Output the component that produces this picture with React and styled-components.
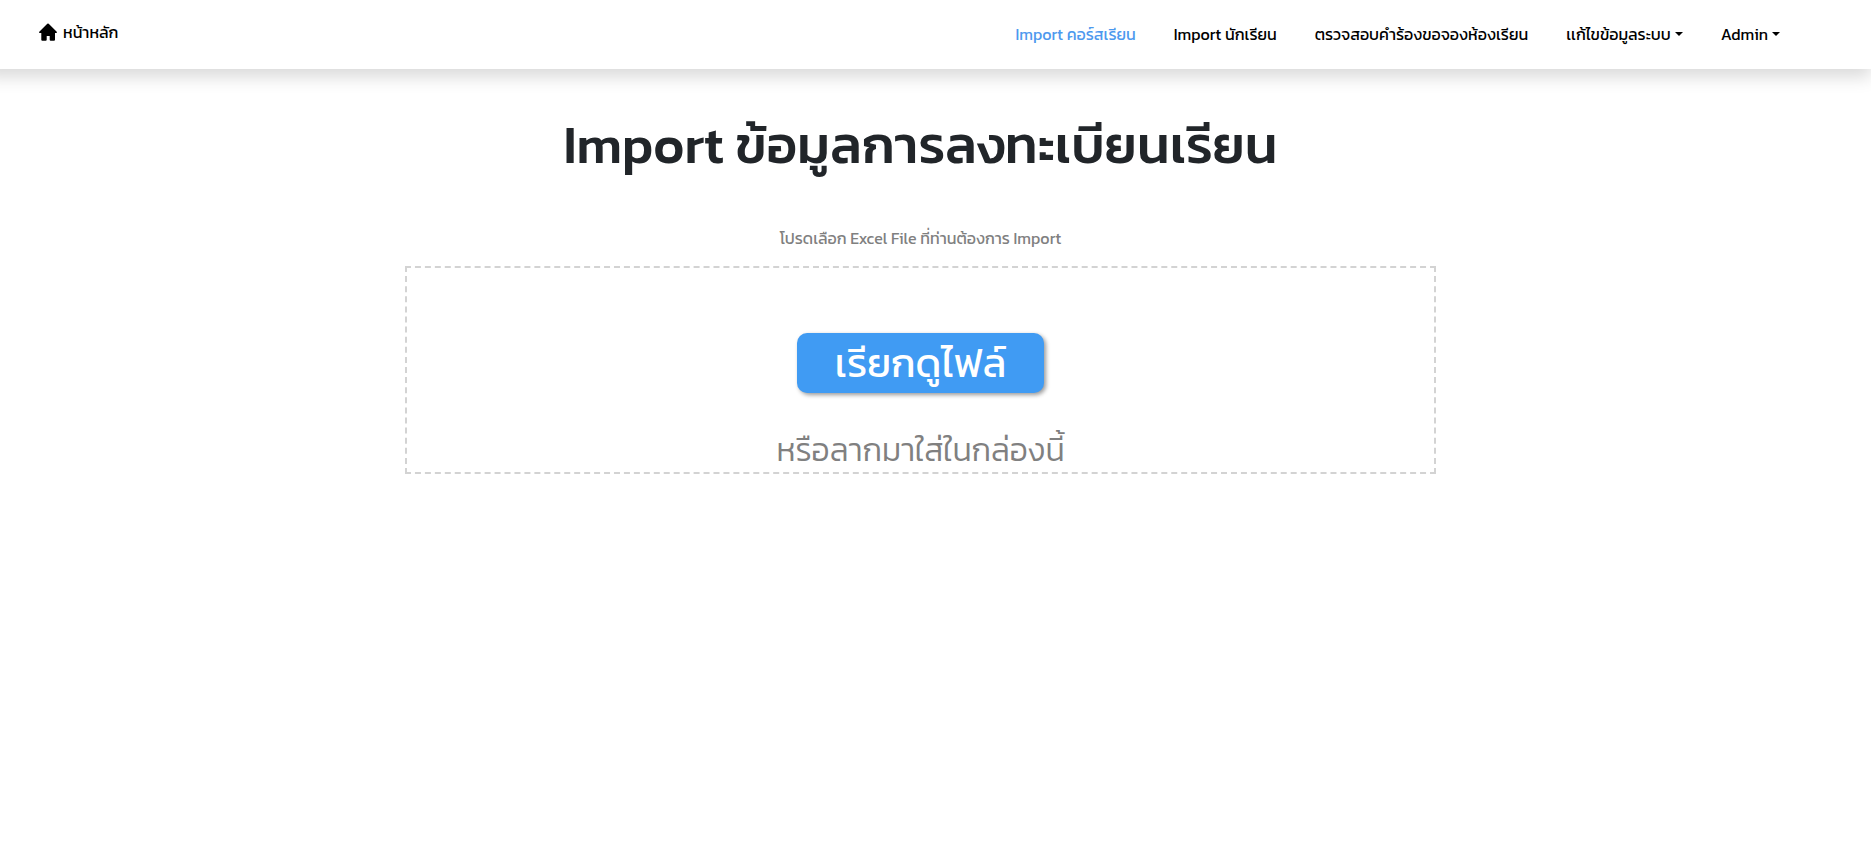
import React from 'react';
import styled, { createGlobalStyle } from 'styled-components';

const Global = createGlobalStyle`
  *, *::before, *::after { box-sizing: border-box; }
  body {
    margin: 0;
    background: #fff;
    color: #212529;
    font-family: Kanit, "Open Sans", "Noto Sans Thai", "Noto Sans", sans-serif;
    font-size: 16px;
    font-weight: 400;
    line-height: 24px;
  }
`;

const Header = styled.header`
  display: flex;
  align-items: center;
  justify-content: space-between;
  min-height: 69px;
  margin-left: -16px;
  padding: 0 91px 2px 55px;
  box-shadow: 0 8px 16px rgba(0, 0, 0, 0.15);
`;

const Brand = styled.a`
  display: inline-flex;
  align-items: center;
  gap: 6px;
  padding-bottom: 3px;
  color: #000;
  text-decoration: none;
`;

const Menu = styled.nav`
  display: flex;
  gap: 38px;
`;

const itemStyle = `
  padding: 0;
  border: 0;
  background: none;
  font: inherit;
  text-decoration: none;
  white-space: nowrap;
`;

const MenuLink = styled.a`
  ${itemStyle}
  color: ${({ $active }) => ($active ? '#4d99ee' : '#000')};
`;

const MenuButton = styled.button`
  ${itemStyle}
  display: inline-flex;
  align-items: center;
  gap: 4px;
  color: #000;
  cursor: pointer;
  &::after {
    content: '';
    border: 4px solid transparent;
    border-top-color: currentColor;
    border-bottom: 0;
  }
`;

const Main = styled.main`
  padding: 44px 30px 0 0;
`;

const Panel = styled.div`
  display: flex;
  flex-direction: column;
  align-items: center;
  width: 56%;
  margin: 0 auto;
`;

const Title = styled.h1`
  margin: 0;
  font-size: 53px;
  font-weight: 500;
  line-height: 64px;
  white-space: nowrap;
`;

const Hint = styled.p`
  margin: 49px 0 16px;
  color: #808080;
`;

const DropBox = styled.section`
  display: flex;
  flex-direction: column;
  align-items: center;
  width: 100%;
  padding-top: 65px;
  border: 2px dashed #d3d3d3;
`;

const BrowseButton = styled.button`
  height: 60px;
  padding: 0 38px;
  border: 0;
  border-radius: 10px;
  background: #409bf3;
  box-shadow: 2px 2px 4px rgba(0, 0, 0, 0.4);
  color: #fff;
  font: inherit;
  font-size: 40px;
  line-height: 60px;
  cursor: pointer;
`;

const DropText = styled.p`
  margin: 35px 0 0;
  color: #808080;
  font-size: 32px;
  font-weight: 300;
  line-height: 44px;
`;

const HomeIcon = () => (
  <svg width="18" height="18" viewBox="0 0 18 18" aria-hidden="true">
    <path
      fill="currentColor"
      d="M8.3.8a1 1 0 0 1 1.4 0l8 8c.5.5.2 1.2-.4 1.2H16v6.700q0 1-1 1h-3.300q-1 0-1-1V13H7.700v3.700q0 1-1 1H3.300q-1 0-1-1V10H.7C.1 10-.2 9.300.3 8.800z"
    />
  </svg>
);

export default function App() {
  return (
    <>
      <Global />
      <Header>
        <Brand href="#">
          <HomeIcon />
          หน้าหลัก
        </Brand>
        <Menu>
          <MenuLink href="#" $active>Import คอร์สเรียน</MenuLink>
          <MenuLink href="#">Import นักเรียน</MenuLink>
          <MenuLink href="#">ตรวจสอบคำร้องขอจองห้องเรียน</MenuLink>
          <MenuButton type="button">เเก้ไขข้อมูลระบบ</MenuButton>
          <MenuButton type="button">Admin</MenuButton>
        </Menu>
      </Header>
      <Main>
        <Panel>
          <Title>Import ข้อมูลการลงทะเบียนเรียน</Title>
          <Hint>โปรดเลือก Excel File ที่ท่านต้องการ Import</Hint>
          <DropBox>
            <BrowseButton type="button">เรียกดูไฟล์</BrowseButton>
            <DropText>หรือลากมาใส่ในกล่องนี้</DropText>
          </DropBox>
        </Panel>
      </Main>
    </>
  );
}
